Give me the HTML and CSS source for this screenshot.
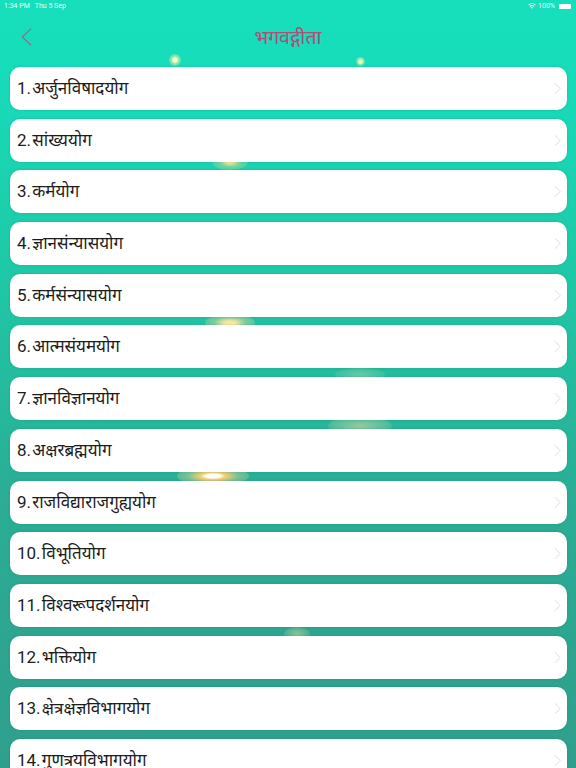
FILE: index.html
```html
<!DOCTYPE html>
<html lang="sa">
<head>
<meta charset="utf-8">
<title>भगवद्गीता</title>
<link rel="stylesheet" href="styles.css">
</head>
<body>
<div class="screen">
  <span class="glow g1"></span><span class="glow g2"></span><span class="glow g3"></span><span class="glow g4"></span><span class="glow g5"></span><span class="glow g6"></span><span class="glow g7"></span><span class="glow g8"></span>
  <div class="status">
    <div class="status-left"><span>1:34 PM</span><span>Thu 5 Sep</span></div>
    <div class="status-right">
      <svg class="wifi" viewBox="0 0 12 9"><path d="M6 8.6 4.4 6.9a2.3 2.3 0 0 1 3.2 0zM3.4 5.9 2.4 4.8a5.2 5.2 0 0 1 7.2 0l-1 1.1a3.8 3.8 0 0 0-5.2 0zM1.4 3.8.3 2.7a8.2 8.2 0 0 1 11.4 0l-1.1 1.1a6.7 6.7 0 0 0-9.2 0z"/></svg>
      <span>100%</span>
      <span class="battery"></span>
    </div>
  </div>
  <header class="nav">
    <svg class="back" viewBox="0 0 12 20"><path d="M11 1 1.5 10 11 19"/></svg>
    <h1>भगवद्गीता</h1>
  </header>
  <ul class="list">
    <li>1. अर्जुनविषादयोग<svg class="chev" viewBox="0 0 8 14"><path d="M1 1l6 6-6 6"/></svg></li>
    <li>2. सांख्ययोग<svg class="chev" viewBox="0 0 8 14"><path d="M1 1l6 6-6 6"/></svg></li>
    <li>3. कर्मयोग<svg class="chev" viewBox="0 0 8 14"><path d="M1 1l6 6-6 6"/></svg></li>
    <li>4. ज्ञानसंन्यासयोग<svg class="chev" viewBox="0 0 8 14"><path d="M1 1l6 6-6 6"/></svg></li>
    <li>5. कर्मसंन्यासयोग<svg class="chev" viewBox="0 0 8 14"><path d="M1 1l6 6-6 6"/></svg></li>
    <li>6. आत्मसंयमयोग<svg class="chev" viewBox="0 0 8 14"><path d="M1 1l6 6-6 6"/></svg></li>
    <li>7. ज्ञानविज्ञानयोग<svg class="chev" viewBox="0 0 8 14"><path d="M1 1l6 6-6 6"/></svg></li>
    <li>8. अक्षरब्रह्मयोग<svg class="chev" viewBox="0 0 8 14"><path d="M1 1l6 6-6 6"/></svg></li>
    <li>9. राजविद्याराजगुह्ययोग<svg class="chev" viewBox="0 0 8 14"><path d="M1 1l6 6-6 6"/></svg></li>
    <li>10. विभूतियोग<svg class="chev" viewBox="0 0 8 14"><path d="M1 1l6 6-6 6"/></svg></li>
    <li>11. विश्वरूपदर्शनयोग<svg class="chev" viewBox="0 0 8 14"><path d="M1 1l6 6-6 6"/></svg></li>
    <li>12. भक्तियोग<svg class="chev" viewBox="0 0 8 14"><path d="M1 1l6 6-6 6"/></svg></li>
    <li>13. क्षेत्रक्षेज्ञविभागयोग<svg class="chev" viewBox="0 0 8 14"><path d="M1 1l6 6-6 6"/></svg></li>
    <li>14. गुणत्रयविभागयोग<svg class="chev" viewBox="0 0 8 14"><path d="M1 1l6 6-6 6"/></svg></li>
  </ul>
</div>
</body>
</html>
```
FILE: styles.css
```css
html, body { margin: 0; padding: 0; }
body { width: 576px; height: 768px; overflow: hidden; font-family: Roboto, "Noto Sans", sans-serif; }
.screen { position: relative; width: 576px; height: 768px; overflow: hidden; background: linear-gradient(180deg, #16dfbb 0%, #17dcb9 10%, #1fc8a6 36%, #2aae95 64%, #2f9f8c 100%); }
.glow { position: absolute; border-radius: 50%; pointer-events: none; }
.g1 { left: 169px; top: 54px; width: 12px; height: 12px; background: radial-gradient(circle, #fffbd0 0 22%, rgba(240,240,150,.55) 45%, rgba(240,240,150,0) 100%); }
.g2 { left: 356px; top: 57px; width: 9px; height: 9px; background: radial-gradient(circle, #f2ffc0 0 25%, rgba(220,250,150,.5) 50%, rgba(220,250,150,0) 100%); }
.g3 { left: 212px; top: 154px; width: 36px; height: 16px; background: radial-gradient(ellipse, #f5e48c 0 12%, rgba(220,220,140,.45) 40%, rgba(220,220,140,0) 100%); }
.g4 { left: 205px; top: 314px; width: 50px; height: 18px; background: radial-gradient(ellipse, #fbe7a0 0 14%, rgba(220,215,150,.5) 45%, rgba(220,215,150,0) 100%); }
.g5 { left: 335px; top: 368px; width: 50px; height: 14px; background: radial-gradient(ellipse, rgba(190,220,170,.45), rgba(190,220,170,0)); }
.g6 { left: 328px; top: 416px; width: 64px; height: 20px; background: radial-gradient(ellipse, rgba(205,215,160,.65), rgba(205,215,160,0)); }
.g7 { left: 177px; top: 466px; width: 72px; height: 20px; background: radial-gradient(ellipse, #fff 0 14%, #f5cf70 24%, rgba(200,210,150,.5) 50%, rgba(200,210,150,0) 100%); }
.g8 { left: 284px; top: 627px; width: 26px; height: 14px; background: radial-gradient(ellipse, rgba(215,220,160,.55), rgba(215,220,160,0)); }
.status { position: relative; display: flex; justify-content: space-between; align-items: center; height: 12px; padding: 0 4px; font-size: 7px; color: #eafff9; }
.status-left { display: flex; gap: 5px; }
.status-right { display: flex; align-items: center; gap: 2px; }
.wifi { width: 8px; height: 6px; fill: #fff; }
.battery { display: block; width: 12px; height: 5px; margin: 0 1px 0 2px; background: #fff; border-radius: 1px; }
.nav { position: relative; display: flex; align-items: center; justify-content: center; height: 50px; }
.back { position: absolute; left: 21px; top: 15px; width: 11px; height: 20px; fill: none; stroke: #b9487e; stroke-width: 1.1; }
.nav h1 { margin: 0 0 2px; font-size: 19.5px; font-weight: 400; color: #b84a78; }
.list { position: relative; display: flex; flex-direction: column; gap: 8.69px; list-style: none; margin: 5px 0 0; padding: 0 9px 0 10px; }
.list li { display: flex; align-items: center; justify-content: space-between; flex: none; box-sizing: border-box; height: 43px; padding: 0 6px 2px 7px; background: #fff; border-radius: 10px; box-shadow: 0 0 3px rgba(0, 60, 50, .14); font-size: 17px; word-spacing: -3px; color: #1c1c1c; }
.chev { width: 7px; height: 13px; margin-top: 2px; fill: none; stroke: #d8d8d8; stroke-width: 1; }
```
